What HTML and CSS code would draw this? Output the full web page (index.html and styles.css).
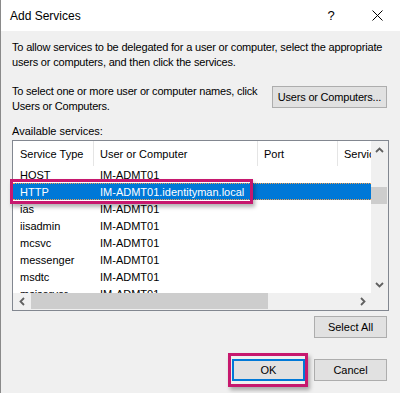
FILE: index.html
```html
<!DOCTYPE html>
<html lang="en">
<head>
  <meta charset="UTF-8">
  <title>Add Services</title>
  <link rel="stylesheet" href="styles.css">
</head>
<body>
  <div class="dialog">
    <div class="titlebar">
      <span class="title">Add Services</span>
      <span class="cap-btn help">?</span>
      <span class="cap-btn close">
        <svg width="11" height="11" viewBox="0 0 11 11"><path d="M0.5 0.5 L10.5 10.5 M10.5 0.5 L0.5 10.5" stroke="#000" stroke-width="1" fill="none"/></svg>
      </span>
    </div>

    <div class="content">
      <p class="intro">To allow services to be delegated for a user or computer, select the appropriate<br>users or computers, and then click the services.</p>

      <div class="select-row">
        <p>To select one or more user or computer names, click<br>Users or Computers.</p>
        <button class="btn btn-users">Users or Computers...</button>
      </div>

      <div class="label">Available services:</div>

      <div class="listbox">
        <div class="list-view">
          <div class="list-head">
            <div class="cell c1">Service Type</div>
            <div class="cell c2">User or Computer</div>
            <div class="cell c3">Port</div>
            <div class="cell c4">Service Name</div>
          </div>
          <div class="row"><div class="cell c1">HOST</div><div class="cell c2">IM-ADMT01</div></div>
          <div class="row selected"><div class="cell c1">HTTP</div><div class="cell c2">IM-ADMT01.identityman.local</div></div>
          <div class="row"><div class="cell c1">ias</div><div class="cell c2">IM-ADMT01</div></div>
          <div class="row"><div class="cell c1">iisadmin</div><div class="cell c2">IM-ADMT01</div></div>
          <div class="row"><div class="cell c1">mcsvc</div><div class="cell c2">IM-ADMT01</div></div>
          <div class="row"><div class="cell c1">messenger</div><div class="cell c2">IM-ADMT01</div></div>
          <div class="row"><div class="cell c1">msdtc</div><div class="cell c2">IM-ADMT01</div></div>
          <div class="row"><div class="cell c1">msiserver</div><div class="cell c2">IM-ADMT01</div></div>
        </div>

        <div class="vscroll">
          <div class="arrow"><svg width="9" height="6" viewBox="0 0 9 6"><path d="M1 5 L4.5 1.5 L8 5" stroke="#606060" stroke-width="1.8" fill="none"/></svg></div>
          <div class="vthumb"></div>
          <div class="arrow arrow-end"><svg width="9" height="6" viewBox="0 0 9 6"><path d="M1 1 L4.5 4.5 L8 1" stroke="#606060" stroke-width="1.8" fill="none"/></svg></div>
        </div>

        <div class="hscroll">
          <div class="arrow"><svg width="6" height="9" viewBox="0 0 6 9"><path d="M5 1 L1.5 4.5 L5 8" stroke="#606060" stroke-width="1.8" fill="none"/></svg></div>
          <div class="hthumb"></div>
          <div class="arrow arrow-end"><svg width="6" height="9" viewBox="0 0 6 9"><path d="M1 1 L4.5 4.5 L1 8" stroke="#606060" stroke-width="1.8" fill="none"/></svg></div>
        </div>

        <div class="corner"></div>
      </div>

      <div class="actions-top">
        <button class="btn">Select All</button>
      </div>

      <div class="actions">
        <button class="btn btn-default">OK</button>
        <button class="btn">Cancel</button>
      </div>
    </div>

    <div class="mark mark-row"></div>
    <div class="mark mark-ok"></div>
  </div>
</body>
</html>
```

FILE: styles.css
```css
html, body {
  margin: 0;
  padding: 0;
  background-color: #f0f0f0;
}

body {
  font-family: "Liberation Sans", Arial, sans-serif;
  font-size: 11px;
  color: #000;
}

.dialog {
  position: relative;
  width: 400px;
  height: 393px;
  box-sizing: border-box;
  border-left: 1px solid #8a8a8a;
  background-color: #f0f0f0;
  overflow: hidden;
}

.titlebar {
  display: flex;
  align-items: center;
  height: 31px;
  padding-left: 9px;
  background-color: #fff;
  font-size: 12px;
}

.title {
  flex: 1;
}

.cap-btn {
  display: flex;
  justify-content: center;
  align-items: center;
  width: 46px;
  height: 31px;
}

.help {
  font-size: 13px;
}

.content {
  padding: 0 11px;
}

.intro {
  margin: 9px 0 0;
  line-height: 15px;
  white-space: nowrap;
  letter-spacing: -0.18px;
}

.select-row {
  display: flex;
  justify-content: space-between;
  align-items: flex-start;
  margin-top: 14px;
}

.select-row p {
  margin: 0;
  line-height: 15px;
  white-space: nowrap;
  letter-spacing: -0.2px;
}

.btn {
  height: 22px;
  padding: 0;
  font: inherit;
  color: #000;
  background-color: #e1e1e1;
  border: 1px solid #adadad;
  box-sizing: border-box;
}

.btn-users {
  width: 115px;
  margin: 2px 2px 0 0;
  letter-spacing: -0.2px;
}

.label {
  margin-top: 10px;
  line-height: 15px;
}

.listbox {
  display: grid;
  grid-template-columns: 1fr 17px;
  grid-template-rows: 1fr 17px;
  height: 171px;
  margin-top: 1px;
  border: 1px solid #828790;
  box-sizing: border-box;
  background-color: #fff;
}

.list-view {
  overflow: hidden;
}

.list-head,
.row {
  display: flex;
  width: 450px;
}

.list-head {
  height: 25px;
}

.row {
  height: 17px;
}

.cell {
  display: flex;
  align-items: center;
  flex-shrink: 0;
  box-sizing: border-box;
  padding-left: 6px;
  white-space: nowrap;
}

.list-head .cell {
  border-right: 1px solid #e5e5e5;
}

.c1 { width: 81px; padding-left: 7px; }
.c2 { width: 164px; }
.c3 { width: 80px; }
.c4 { width: 110px; }

.row.selected {
  width: 358px;
  background-color: #0078d7;
  color: #fff;
  border-top: 1px dotted #f0a050;
  border-bottom: 1px dotted #f0a050;
  box-sizing: border-box;
}

.vscroll,
.hscroll,
.corner {
  background-color: #f0f0f0;
}

.vscroll {
  display: flex;
  flex-direction: column;
}

.hscroll {
  display: flex;
}

.arrow {
  display: flex;
  justify-content: center;
  align-items: center;
  width: 17px;
  height: 17px;
  flex-shrink: 0;
}

.arrow-end {
  margin-left: auto;
  margin-top: auto;
}

.vthumb {
  height: 17px;
  margin: 29px 1px 0 0;
  background-color: #cdcdcd;
}

.hthumb {
  width: 237px;
  margin: 0 0 1px 1px;
  background-color: #cdcdcd;
}

.actions-top,
.actions {
  display: flex;
  justify-content: flex-end;
}

.actions-top {
  margin-top: 5px;
}

.actions-top .btn,
.actions .btn {
  width: 73px;
}

.actions-top .btn {
  margin-right: 2px;
}

.actions {
  gap: 9px;
  margin-top: 21px;
  padding-right: 2px;
}

.btn-default {
  border: 2px solid #0078d7;
}

.mark {
  position: absolute;
  box-sizing: border-box;
  border: 3px solid #c7186e;
  box-shadow: 2px 3px 4px rgba(0, 0, 0, 0.3);
}

.mark-row {
  left: 9px;
  top: 179px;
  width: 243px;
  height: 25px;
}

.mark-ok {
  left: 227px;
  top: 353px;
  width: 80px;
  height: 34px;
}
```
